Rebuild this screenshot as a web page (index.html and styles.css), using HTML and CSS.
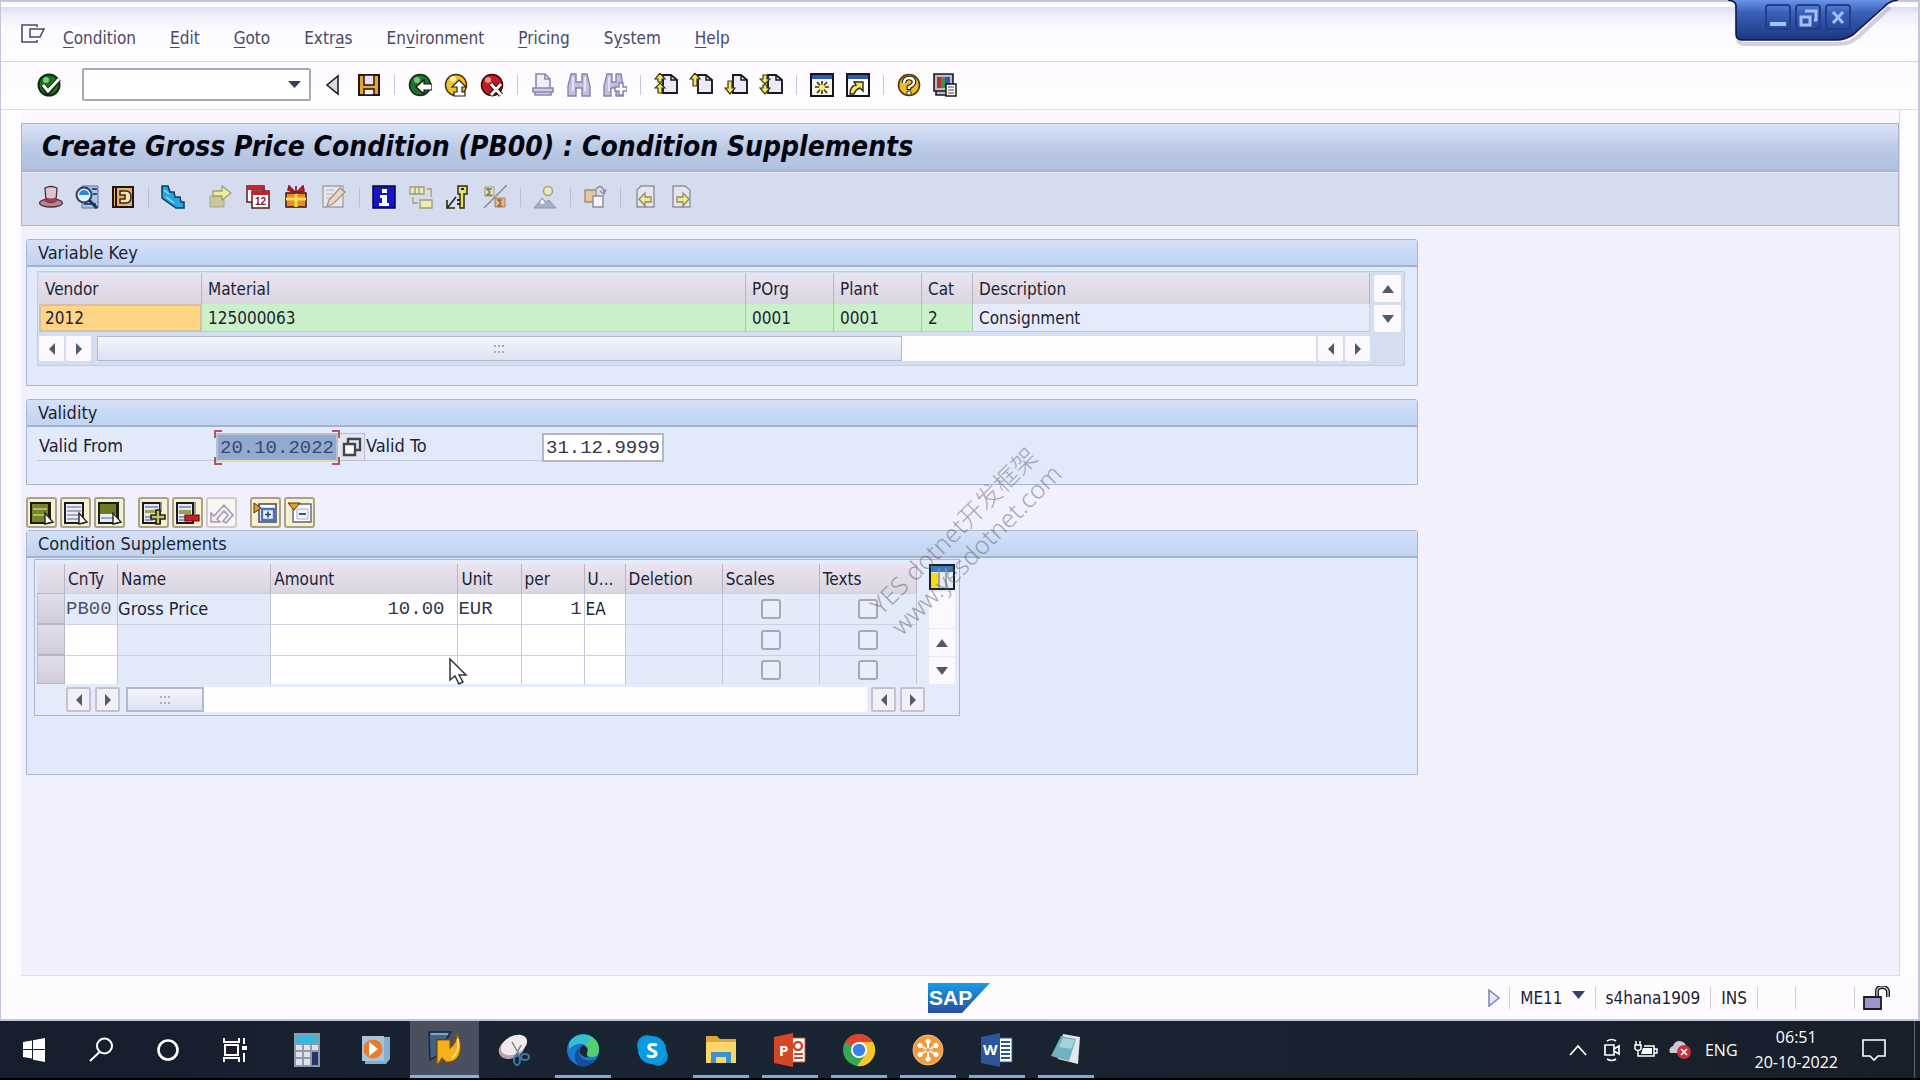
FILE: index.html
```html
<!DOCTYPE html>
<html lang="en">
<head>
<meta charset="utf-8">
<title>Create Gross Price Condition (PB00) : Condition Supplements</title>
<link rel="stylesheet" href="styles.css">
</head>
<body>
<div class="window">
  <nav class="menubar">
    <button class="icon-btn menu-icon" aria-label="Window menu"><svg width="24" height="20" viewBox="0 0 24 20" fill="none" stroke="#4a4a72" stroke-width="1.6"><path d="M16 3V1H1v17h15v-2M9 5h14l-4 8H9z"/></svg></button>
    <a href="#"><u>C</u>ondition</a>
    <a href="#"><u>E</u>dit</a>
    <a href="#"><u>G</u>oto</a>
    <a href="#">Extr<u>a</u>s</a>
    <a href="#">En<u>v</u>ironment</a>
    <a href="#"><u>P</u>ricing</a>
    <a href="#">S<u>y</u>stem</a>
    <a href="#"><u>H</u>elp</a>
  </nav>

  <div class="window-controls">
    <svg class="controls-shape" width="172" height="48" viewBox="0 0 172 48">
      <defs><linearGradient id="wc" x1="0" y1="0" x2="0" y2="1"><stop offset="0" stop-color="#6a94e8"/><stop offset=".3" stop-color="#3a62b8"/><stop offset="1" stop-color="#1b3580"/></linearGradient></defs>
      <path d="M10 40q1 4 8 4h92q14 0 22-9l30-28" fill="none" stroke="#a9a6bb" stroke-width="4" opacity=".5"/>
      <path d="M0 0q8 1 8 6v28q0 6 6 6h94q10 0 18-6l30-27q5-6 14-7z" fill="url(#wc)"/>
      <path d="M0 0q8 1 8 6v28q0 6 6 6h94q10 0 18-6l30-27q5-6 14-7" fill="none" stroke="#0c1a48" stroke-width="1.6"/>
    </svg>
    <div class="controls-row">
      <button aria-label="Minimize"><svg width="24" height="24" viewBox="0 0 24 24"><path d="M4 17h16v4H4z" fill="#a3c0ff"/></svg></button>
      <button aria-label="Restore"><svg width="24" height="24" viewBox="0 0 24 24" fill="none" stroke="#a3c0ff" stroke-width="3"><path d="M5 12h9v8H5zM9 6h11v9h-2"/></svg></button>
      <button aria-label="Close"><svg width="24" height="24" viewBox="0 0 24 24" stroke="#a3c0ff" stroke-width="3"><path d="M7 7l10 11M17 7L7 18"/></svg></button>
    </div>
  </div>

  <div class="toolbar">
    <button class="icon-btn" aria-label="Enter"><svg viewBox="0 0 24 24"><circle cx="12" cy="12" r="10.5" fill="#1e6d22" stroke="#0b2a10" stroke-width="2"/><circle cx="9" cy="7" r="3" fill="#7fd07c"/><path d="M6 12l5 7L22 6" fill="none" stroke="#101a10" stroke-width="5"/><path d="M6 12l5 6L22 6" fill="none" stroke="#fff" stroke-width="3"/></svg></button>
    <div class="command">
      <input type="text" aria-label="Command field">
      <svg width="13" height="8" viewBox="0 0 13 8"><path d="M0 1h13L6.500 8z" fill="#35405f"/></svg>
    </div>
    <div class="tools first">
      <button class="icon-btn" aria-label="Collapse"><svg viewBox="0 0 24 24"><path d="M17 3v18L6 12z" fill="#dadbe4" stroke="#222" stroke-width="1.6"/></svg></button>
      <button class="icon-btn" aria-label="Save"><svg viewBox="0 0 24 24"><path d="M2 2h20v20H2z" fill="#e5a43c" stroke="#241705" stroke-width="2"/><path d="M7 2h10v10H7z" fill="#efdcf2" stroke="#241705" stroke-width="1.500"/><path d="M7 16h10v6H7z" fill="#f4edf7" stroke="#241705" stroke-width="1.500"/></svg></button>
    </div>
    <span class="sep"></span>
    <div class="tools">
      <button class="icon-btn" aria-label="Back"><svg viewBox="0 0 24 24"><circle cx="12" cy="12" r="10.500" fill="#246f2b" stroke="#0d2b10" stroke-width="1.500"/><circle cx="9" cy="7" r="3" fill="#7cc780"/><path d="M8 14l8-7v4h8v6h-8v4z" fill="#fff" stroke="#111" stroke-width="1.200"/></svg></button>
      <button class="icon-btn" aria-label="Exit"><svg viewBox="0 0 24 24"><circle cx="12" cy="12" r="10.500" fill="#f0c22c" stroke="#4a3507" stroke-width="1.500"/><circle cx="9" cy="6" r="3" fill="#fff2a0"/><path d="M15 7l7 7h-4v5h3v4H10v-4h3v-5H8z" fill="#fff" stroke="#222" stroke-width="1.200"/></svg></button>
      <button class="icon-btn" aria-label="Cancel"><svg viewBox="0 0 24 24"><circle cx="12" cy="12" r="10.500" fill="#c11d22" stroke="#3e0508" stroke-width="1.500"/><circle cx="8" cy="7" r="3" fill="#f19191"/><path d="M11 11l10 11M21 11L11 22" stroke="#300" stroke-width="5"/><path d="M11 11l10 11M21 11L11 22" stroke="#fff" stroke-width="3"/></svg></button>
    </div>
    <span class="sep"></span>
    <div class="tools">
      <button class="icon-btn" aria-label="Print"><svg viewBox="0 0 24 24" fill="#f0eef9" stroke="#8c88ab" stroke-width="1.600"><path d="M5 15V1h9l5 5v9M14 1v5h5"/><path d="M2 15h20v4H2zM4 19h16v3H4z" fill="#cfcbe6"/></svg></button>
      <button class="icon-btn" aria-label="Find"><svg viewBox="0 0 24 24" fill="#c3bfe3" stroke="#8783ad" stroke-width="1.400"><path d="M4 1h5v8h6V1h5l3 12v10h-8v-8H9v8H1V13z"/><path d="M6 4v14M18 4v14" stroke="#f4f2ff"/></svg></button>
      <button class="icon-btn" aria-label="Find next"><svg viewBox="0 0 24 24" fill="#c3bfe3" stroke="#8783ad" stroke-width="1.400"><path d="M4 1h5v8h4V1h5l2 12v10h-7v-8H8v8H1V13z"/><path d="M6 4v14" stroke="#f4f2ff"/><path d="M16 10h4v4h4v4h-4v4h-4v-4h-4v-4h4z" fill="#fff"/></svg></button>
    </div>
    <span class="sep"></span>
    <div class="tools tight">
      <button class="icon-btn" aria-label="First page"><svg viewBox="0 0 24 24"><path d="M9 2h8l6 5v13H9z" fill="#eceafa" stroke="#191926" stroke-width="1.900"/><path d="M17 2v5h6" fill="none" stroke="#191926" stroke-width="1.500"/><path d="M6 0l5 6H8v3H4V6H1zM6 10l5 5H8v5H4v-5H1z" fill="#f1e56a" stroke="#3b3710" stroke-width="1.200"/></svg></button>
      <button class="icon-btn" aria-label="Previous page"><svg viewBox="0 0 24 24"><path d="M9 2h8l6 5v13H9z" fill="#eceafa" stroke="#191926" stroke-width="1.900"/><path d="M17 2v5h6" fill="none" stroke="#191926" stroke-width="1.500"/><path d="M6 0l5 6H8v7H4V6H1z" fill="#f1e56a" stroke="#3b3710" stroke-width="1.200"/></svg></button>
      <button class="icon-btn" aria-label="Next page"><svg viewBox="0 0 24 24"><path d="M9 2h8l6 5v13H9z" fill="#eceafa" stroke="#191926" stroke-width="1.900"/><path d="M17 2v5h6" fill="none" stroke="#191926" stroke-width="1.500"/><path d="M4 8h4v7h3l-5 6-5-6h3z" fill="#f1e56a" stroke="#3b3710" stroke-width="1.200"/></svg></button>
      <button class="icon-btn" aria-label="Last page"><svg viewBox="0 0 24 24"><path d="M9 2h8l6 5v13H9z" fill="#eceafa" stroke="#191926" stroke-width="1.900"/><path d="M17 2v5h6" fill="none" stroke="#191926" stroke-width="1.500"/><path d="M4 2h4v4h3l-5 5-5-5h3zM4 12h4v3h3l-5 6-5-6h3z" fill="#f1e56a" stroke="#3b3710" stroke-width="1.200"/></svg></button>
    </div>
    <span class="sep"></span>
    <div class="tools">
      <button class="icon-btn" aria-label="New session"><svg viewBox="0 0 24 24"><path d="M1 1h22v22H1z" fill="#fbf7e8" stroke="#14141f" stroke-width="2"/><path d="M2 2h20v4H2z" fill="#2b59b8"/><path d="M12 8v13M5 14h14M7 9l10 11M17 9L7 20" stroke="#31300f" stroke-width="1.600"/><circle cx="12" cy="14.500" r="3" fill="#f8ec6a"/></svg></button>
      <button class="icon-btn" aria-label="Create shortcut"><svg viewBox="0 0 24 24"><path d="M1 1h22v22H1z" fill="#fff" stroke="#14141f" stroke-width="2"/><path d="M2 2h20v4H2z" fill="#2b59b8"/><path d="M4 21q0-8 6-9L8 9h9v9l-3-3q-4 1-6 6z" fill="#f1e56a" stroke="#2c2a10" stroke-width="1.400"/></svg></button>
    </div>
    <span class="sep"></span>
    <div class="tools">
      <button class="icon-btn" aria-label="Help"><svg viewBox="0 0 24 24"><circle cx="12" cy="12" r="10.500" fill="#f0bb2d" stroke="#4d3a08" stroke-width="1.600"/><path d="M7 10q0-5 5-5t5 4q0 3-5 5v3" fill="none" stroke="#2b2108" stroke-width="4.600"/><path d="M7 10q0-5 5-5t5 4q0 3-5 5v2" fill="none" stroke="#fff" stroke-width="2.400"/><circle cx="12" cy="20" r="2.200" fill="#fff" stroke="#2b2108"/></svg></button>
      <button class="icon-btn" aria-label="Customize layout"><svg viewBox="0 0 24 24"><path d="M1 1h19v17H1zM3 18h15v4H3z" fill="#bcbcc8" stroke="#18181f" stroke-width="1.600"/><path d="M4 4h5v11H4z" fill="#c82a2a"/><path d="M8 4h4v11H8z" fill="#2f9b45"/><path d="M12 4h5v11h-5z" fill="#4646c8"/><path d="M13 11h10v12H13z" fill="#fff" stroke="#18181f" stroke-width="1.500"/><path d="M15 14h6M15 17h6M15 20h6" stroke="#444"/></svg></button>
    </div>
  </div>

  <main class="screen">
    <header class="title-panel">
      <h1>Create Gross Price Condition (PB00) : Condition Supplements</h1>
      <div class="app-toolbar">
        <div class="tools">
          <button class="icon-btn" aria-label="Header"><svg viewBox="0 0 24 24"><ellipse cx="12" cy="18" rx="11.500" ry="4" fill="#b78592" stroke="#4c2f3c" stroke-width="1.300"/><path d="M6 3q6-3 12 0l-1 13q-5 3-10 0z" fill="#d9c6cf" stroke="#4c2f3c" stroke-width="1.300"/><path d="M6.500 12q5.500 3 11 0v4q-5.500 3-11 0z" fill="#9d3c50"/></svg></button>
          <button class="icon-btn" aria-label="Details"><svg viewBox="0 0 24 24"><path d="M7 1h16v22H7z" fill="#a9c3e8" stroke="#5e7397"/><path d="M9 19h12M17 4h5M18 9h4" stroke="#274f8c" stroke-width="2"/><circle cx="9" cy="10" r="7.500" fill="#dff0ff" stroke="#2d405e" stroke-width="2"/><path d="M4 10a5 5 0 0110 0z" fill="#2b87d4"/><path d="M14 15l8 8" stroke="#26324c" stroke-width="3"/></svg></button>
          <button class="icon-btn" aria-label="Key"><svg viewBox="0 0 24 24"><path d="M2 2h20v20H2z" fill="#e6b26a" stroke="#1f160b" stroke-width="2"/><path d="M5 2v20" stroke="#1f160b" stroke-width="2"/><path d="M9 6h6q5 0 5 6t-5 6H9v-4h5v-4H9z" fill="#f6e2bb" stroke="#382712" stroke-width="1.500"/></svg></button>
        </div>
        <span class="sep"></span>
        <div class="tools"><button class="icon-btn" aria-label="Scales"><svg viewBox="0 0 24 24"><path d="M1 1h6l2 6h4l1 5h5l1 5h3v6h-8L1 13z" fill="#2aa4dc" stroke="#0a3c60" stroke-width="1.500"/><path d="M3 5l5 4M5 12l8 6" stroke="#8fe0fb" stroke-width="1.500"/></svg></button></div>
        <div class="tools loose">
          <button class="icon-btn" aria-label="Copy item"><svg viewBox="0 0 24 24"><path d="M2 11h14v11H2z" fill="#c8c89a" stroke="#a5a487"/><path d="M5 6h9V1l9 7-9 7v-4H5z" fill="#eeeaa0" stroke="#a19f74" stroke-width="1.300"/></svg></button>
          <button class="icon-btn" aria-label="Validity periods"><svg viewBox="0 0 24 24"><path d="M1 1h17v16H1z" fill="#fff" stroke="#58181f" stroke-width="1.500"/><path d="M1 1h17v4H1z" fill="#c5232c"/><path d="M6 6h17v17H6z" fill="#fff" stroke="#58181f" stroke-width="1.500"/><path d="M6 6h17v4H6z" fill="#c5232c"/><text x="9" y="20" class="tiny">12</text></svg></button>
          <button class="icon-btn" aria-label="Free goods"><svg viewBox="0 0 24 24"><path d="M2 8h20v14H2z" fill="#eb8a22" stroke="#3a1508" stroke-width="1.500"/><path d="M12 8v14M2 14h20" stroke="#f6df54" stroke-width="3"/><path d="M12 8L5 1l-1 4zM12 8l7-7 1 5zM12 8V1" fill="#cc2430" stroke="#8e1420" stroke-width="1.600"/></svg></button>
          <button class="icon-btn" aria-label="Condition texts"><svg viewBox="0 0 24 24"><path d="M1 1h20v21H1z" fill="#e9e7ee" stroke="#a39da6" stroke-width="1.300"/><path d="M4 5h8M4 9h7M4 13h5" stroke="#b6b4bf"/><path d="M5 21l2-6L18 3l5 4-12 12z" fill="#eed6bd" stroke="#9f928a" stroke-width="1.300"/></svg></button>
        </div>
        <span class="sep"></span>
        <div class="tools mid">
          <button class="icon-btn" aria-label="Additional data"><svg viewBox="0 0 24 24"><path d="M1 1h22v22H1z" fill="#1616c4" stroke="#05053f" stroke-width="1.500"/><path d="M10 4h5v4h-5zM8 10h7v8h2v3H7v-3h3v-5H8z" fill="#fff"/></svg></button>
          <button class="icon-btn" aria-label="Exclusion"><svg viewBox="0 0 24 24" fill="#ecebb2" stroke="#9a9a86" stroke-width="1.300"><path d="M1 2h14v7H1zM6 2v7M10 2v7M11 15h12v8H11zM18 4h4v8M4 12v6h5"/></svg></button>
          <button class="icon-btn" aria-label="Release status"><svg viewBox="0 0 24 24"><path d="M10 12L2 22M1 15v8h8" fill="none" stroke="#282820" stroke-width="1.600"/><path d="M12 1h9v8h-3v14h-4V9h-2z" fill="#e8df63" stroke="#2e2b12" stroke-width="1.500"/><path d="M15 4h3M14 15h-3M14 19h-3" stroke="#2e2b12" stroke-width="2"/></svg></button>
          <button class="icon-btn" aria-label="Cumulative values"><svg viewBox="0 0 24 24"><path d="M2 2h9v9H2z" fill="#eee7a9" stroke="#a19a7c"/><path d="M9 4H4l3 3-3 3h5" fill="none" stroke="#7b745a" stroke-width="1.500"/><path d="M12 13h10v9H12z" fill="#e2b98a" stroke="#9b8463"/><path d="M19 15h-4l3 3-3 3h4" fill="none" stroke="#8b6842" stroke-width="1.300"/><path d="M24 0L1 23" stroke="#8e8b86" stroke-width="1.500"/></svg></button>
        </div>
        <span class="sep"></span>
        <div class="tools"><button class="icon-btn" aria-label="Overview"><svg viewBox="0 0 24 24"><circle cx="15" cy="6" r="4.500" fill="#eeeab1" stroke="#a5a282" stroke-width="1.400"/><path d="M1 23l8-10 4 4 3-2 7 8z" fill="#a5afc4" stroke="#8f98ad"/><path d="M9 14l3 4-3 1-2-1z" fill="#fff"/></svg></button></div>
        <span class="sep"></span>
        <div class="tools"><button class="icon-btn" aria-label="Duplicate"><svg viewBox="0 0 24 24"><path d="M2 5h11v12H2z" fill="#e5c7a0" stroke="#a08c78" stroke-width="1.300"/><path d="M10 11h10v11H10z" fill="#f5f5fa" stroke="#8c8c98" stroke-width="1.400"/><path d="M13 4q6-6 8 3M17 6l4 3 2-5" fill="none" stroke="#8c8c98" stroke-width="1.500"/></svg></button></div>
        <span class="sep"></span>
        <div class="tools mid">
          <button class="icon-btn" aria-label="Previous item"><svg viewBox="0 0 24 24"><path d="M8 1h13v21H4V5z" fill="#e4e5ef" stroke="#8d909e" stroke-width="1.400"/><path d="M6 14l6-6v4h6v5h-6v4z" fill="#eee99c" stroke="#8e8b62" stroke-width="1.300"/></svg></button>
          <button class="icon-btn" aria-label="Next item"><svg viewBox="0 0 24 24"><path d="M3 1h12l5 4v17H3z" fill="#e4e5ef" stroke="#8d909e" stroke-width="1.400"/><path d="M19 14l-6-6v4H7v5h6v4z" fill="#eee99c" stroke="#8e8b62" stroke-width="1.300"/></svg></button>
        </div>
      </div>
    </header>

    <section class="group key-group">
      <h2>Variable Key</h2>
      <div class="key-grid">
        <table class="key-table">
          <colgroup><col class="k-vendor"><col class="k-material"><col class="k-org"><col class="k-org"><col class="k-cat"><col></colgroup>
          <thead><tr><th>Vendor</th><th>Material</th><th>POrg</th><th>Plant</th><th>Cat</th><th>Description</th></tr></thead>
          <tbody><tr><td class="current">2012</td><td class="key">125000063</td><td class="key">0001</td><td class="key">0001</td><td class="key">2</td><td>Consignment</td></tr></tbody>
        </table>
        <div class="vscroll">
          <button class="arrow flat" aria-label="Scroll up"><svg width="12" height="8" viewBox="0 0 12 8"><path d="M0 8h12L6 0z"/></svg></button>
          <button class="arrow flat" aria-label="Scroll down"><svg width="12" height="8" viewBox="0 0 12 8"><path d="M0 0h12L6 8z"/></svg></button>
        </div>
        <div class="hscroll">
          <button class="arrow flat" aria-label="Scroll to start"><svg width="8" height="12" viewBox="0 0 8 12"><path d="M7 0v12L1 6z"/></svg></button>
          <button class="arrow flat" aria-label="Scroll left"><svg width="8" height="12" viewBox="0 0 8 12"><path d="M1 0v12l6-6z"/></svg></button>
          <div class="track"><div class="thumb key-thumb"><i></i></div></div>
          <button class="arrow flat" aria-label="Scroll right"><svg width="8" height="12" viewBox="0 0 8 12"><path d="M7 0v12L1 6z"/></svg></button>
          <button class="arrow flat" aria-label="Scroll to end"><svg width="8" height="12" viewBox="0 0 8 12"><path d="M1 0v12l6-6z"/></svg></button>
        </div>
      </div>
    </section>

    <section class="group validity">
      <h2>Validity</h2>
      <div class="validity-row">
        <label class="from-label" for="from">Valid From</label>
        <div class="focus-box"><input class="date selected" id="from" type="text" value="20.10.2022"></div>
        <button class="f4" aria-label="Input help"><svg width="20" height="20" viewBox="0 0 20 20"><path d="M6 2h12v11H6z" fill="#e9e9f2" stroke="#45454d" stroke-width="2.400"/><path d="M2 7h11v11H2z" fill="#fff" stroke="#45454d" stroke-width="2.400"/></svg></button>
        <label class="to-label" for="to">Valid To</label>
        <input class="date to" id="to" type="text" value="31.12.9999">
      </div>
    </section>

    <div class="edit-toolbar">
      <div class="edit-group">
        <button aria-label="Select all"><svg viewBox="0 0 26 26"><path d="M2 3h18v20H2z" fill="#76822c" stroke="#1b1b10" stroke-width="2"/><path d="M21 2v20" stroke="#1b1b10" stroke-width="2"/><path d="M4 9h14M4 15h14" stroke="#c4ca83" stroke-width="1.500"/><path d="M16 13v11l8-2z" fill="#fff" stroke="#222" stroke-width="1.400"/></svg></button>
        <button aria-label="Deselect all"><svg viewBox="0 0 26 26"><path d="M2 3h18v20H2z" fill="#e9ecf8" stroke="#1b1b20" stroke-width="2"/><path d="M4 7h14M4 11h14M4 15h12M4 19h12" stroke="#8693ae" stroke-width="1.500"/><path d="M16 13v11l8-2z" fill="#fff" stroke="#222" stroke-width="1.400"/></svg></button>
        <button aria-label="Select block"><svg viewBox="0 0 26 26"><path d="M2 3h18v20H2z" fill="#e9ecf8" stroke="#1b1b20" stroke-width="2"/><path d="M3 4h16v10H3z" fill="#6d7c1e"/><path d="M4 18h12" stroke="#8693ae" stroke-width="1.500"/><path d="M21 2v20" stroke="#1b1b10" stroke-width="2"/><path d="M16 13v11l8-2z" fill="#fff" stroke="#222" stroke-width="1.400"/></svg></button>
      </div>
      <div class="edit-group">
        <button aria-label="Insert row"><svg viewBox="0 0 26 26"><path d="M2 3h17v20H2z" fill="#e4e8f4" stroke="#1b1b20" stroke-width="2"/><path d="M20 2v10M4 7h13M4 17h8M4 20h8" stroke="#77829c" stroke-width="1.500"/><path d="M4 10h13v3H4z" fill="#9aa354"/><path d="M15 10h4v5h5v4h-5v5h-4v-5h-5v-4h5z" fill="#c1c573" stroke="#23230f" stroke-width="1.600"/></svg></button>
        <button aria-label="Delete row"><svg viewBox="0 0 26 26"><path d="M2 3h16v20H2z" fill="#e4e8f4" stroke="#1b1b20" stroke-width="2"/><path d="M20 2v12M4 7h12M4 17h8M4 20h8" stroke="#77829c" stroke-width="1.500"/><path d="M4 10h12v4H4z" fill="#9aa354"/><path d="M10 15h14v6H10z" fill="#d01f22" stroke="#5b0d10" stroke-width="1.200"/></svg></button>
        <button class="off" aria-label="Undo"><svg viewBox="0 0 26 26"><path d="M2 13v9h9l-3-3 7-8 4 4-5 6 3 2 7-8-9-10L5 16z" fill="#f4e8ee" stroke="#a498b6" stroke-width="1.500"/></svg></button>
      </div>
      <div class="edit-group">
        <button aria-label="Detail"><svg viewBox="0 0 26 26"><path d="M6 4h17v18H6z" fill="#fff" stroke="#3a4565" stroke-width="1.500"/><path d="M9 9h12v11H9z" fill="#e8f0ff" stroke="#4a72b4" stroke-width="2.400"/><path d="M12 14.500h6M15 11.500v6" stroke="#25406f" stroke-width="1.600"/><path d="M1 3l7 5-7 5z" fill="#e79d2b" stroke="#4c3512"/></svg></button>
        <button aria-label="Overview of items"><svg viewBox="0 0 26 26"><path d="M6 4h18v18H6z" fill="#fff" stroke="#5d6278" stroke-width="1.400"/><path d="M10 9h11v10H10z" fill="#f4f5ff" stroke="#a4acc8"/><path d="M12 14h7" stroke="#25406f" stroke-width="1.800"/><path d="M1 3h12L7 10z" fill="#e79d2b" stroke="#4c3512"/></svg></button>
      </div>
    </div>

    <section class="group supplements">
      <h2>Condition Supplements</h2>
      <div class="cond-grid">
        <table class="cond-table">
          <colgroup><col class="c-sel"><col class="c-type"><col class="c-name"><col class="c-amount"><col class="c-unit"><col class="c-per"><col class="c-uom"><col class="c-flag"><col class="c-flag"><col class="c-flag"></colgroup>
          <thead><tr><th></th><th>CnTy</th><th>Name</th><th>Amount</th><th>Unit</th><th>per</th><th>U...</th><th>Deletion</th><th>Scales</th><th>Texts</th></tr></thead>
          <tbody>
            <tr><td class="row-sel"></td><td class="mono">PB00</td><td class="name">Gross Price</td><td class="edit"><input class="amount" aria-label="Amount" value="10.00"></td><td class="edit"><input aria-label="Unit" value="EUR"></td><td class="edit"><input class="per" aria-label="per" value="1"></td><td class="edit uom">EA</td><td></td><td class="tick"><input type="checkbox" aria-label="Scales" disabled></td><td class="tick"><input type="checkbox" aria-label="Texts" disabled></td></tr>
            <tr><td class="row-sel"></td><td class="edit"><input aria-label="CnTy"></td><td></td><td class="edit"><input class="amount" aria-label="Amount"></td><td class="edit"><input aria-label="Unit"></td><td class="edit"><input class="per" aria-label="per"></td><td class="edit"></td><td></td><td class="tick"><input type="checkbox" aria-label="Scales" disabled></td><td class="tick"><input type="checkbox" aria-label="Texts" disabled></td></tr>
            <tr><td class="row-sel"></td><td class="edit"><input aria-label="CnTy"></td><td></td><td class="edit"><input class="amount" aria-label="Amount"></td><td class="edit"><input aria-label="Unit"></td><td class="edit"><input class="per" aria-label="per"></td><td class="edit"></td><td></td><td class="tick"><input type="checkbox" aria-label="Scales" disabled></td><td class="tick"><input type="checkbox" aria-label="Texts" disabled></td></tr>
          </tbody>
        </table>
        <div class="cond-side">
          <button class="config" aria-label="Table settings"><svg width="26" height="26" viewBox="0 0 26 26"><path d="M1 1h24v24H1z" fill="#e9eaf1" stroke="#16202e" stroke-width="2"/><path d="M2 2h22v6H2z" fill="#3d78b8"/><path d="M2 9h8v15H2z" fill="#f7dc15"/><path d="M10 4v20M17 4v20" stroke="#8792a5" stroke-width="1.500"/></svg></button>
          <div class="side-track"></div>
          <button class="arrow flat" aria-label="Scroll up"><svg width="12" height="8" viewBox="0 0 12 8"><path d="M0 8h12L6 0z"/></svg></button>
          <button class="arrow flat" aria-label="Scroll down"><svg width="12" height="8" viewBox="0 0 12 8"><path d="M0 0h12L6 8z"/></svg></button>
        </div>
        <div class="hscroll">
          <button class="arrow" aria-label="Scroll to start"><svg width="8" height="12" viewBox="0 0 8 12"><path d="M7 0v12L1 6z"/></svg></button>
          <button class="arrow" aria-label="Scroll left"><svg width="8" height="12" viewBox="0 0 8 12"><path d="M1 0v12l6-6z"/></svg></button>
          <div class="track"><div class="thumb cond-thumb"><i></i></div></div>
          <button class="arrow" aria-label="Scroll right"><svg width="8" height="12" viewBox="0 0 8 12"><path d="M7 0v12L1 6z"/></svg></button>
          <button class="arrow" aria-label="Scroll to end"><svg width="8" height="12" viewBox="0 0 8 12"><path d="M1 0v12l6-6z"/></svg></button>
        </div>
      </div>
    </section>
  </main>

  <footer class="statusbar">
    <svg class="sap-logo" width="62" height="30" viewBox="0 0 62 30"><defs><linearGradient id="sap" x1="0" y1="0" x2="0" y2="1"><stop offset="0" stop-color="#1a9be4"/><stop offset="1" stop-color="#2350a0"/></linearGradient></defs><path d="M0 0h62L34 30H0z" fill="url(#sap)"/><text x="1" y="22" class="sap-text">SAP</text></svg>
    <div class="status-items">
      <button class="icon-btn expand" aria-label="Expand status"><svg width="12" height="18" viewBox="0 0 12 18"><path d="M1 1l10 8-10 8z" fill="#e3e9f6" stroke="#7c8ab5" stroke-width="1.600"/></svg></button>
      <button class="status-cell tcode">ME11 <svg width="13" height="8" viewBox="0 0 13 8"><path d="M0 0h13L6.500 8z" fill="#333f70"/></svg></button>
      <span class="status-cell">s4hana1909</span>
      <span class="status-cell">INS</span>
      <span class="status-cell blank"></span>
      <span class="status-cell blank wide"></span>
      <span class="status-cell lock"><svg width="27" height="24" viewBox="0 0 27 24"><path d="M14 12V5q0-4 5-4t6 4v6" fill="none" stroke="#1b1b22" stroke-width="4"/><path d="M14 12V5q0-4 5-4t6 4v6" fill="none" stroke="#e3e3ea" stroke-width="1.200"/><path d="M1 11h17v12H1z" fill="#9c96c8" stroke="#1b1b22" stroke-width="1.800"/></svg></span>
    </div>
  </footer>
</div>

<div class="taskbar">
  <div class="system-buttons">
    <button aria-label="Start"><svg width="24" height="24" viewBox="0 0 24 24" fill="#fff"><path d="M1 4l9-1.500V11H1zM11 2.300L23 0v11H11zM1 12h9v8.500L1 19zM11 12h12v12l-12-2.300z"/></svg></button>
    <button aria-label="Search"><svg width="26" height="26" viewBox="0 0 26 26" fill="none" stroke="#fff" stroke-width="2"><circle cx="16.500" cy="9" r="7.500"/><path d="M11.500 15L2 24"/></svg></button>
    <button aria-label="Cortana"><svg width="24" height="24" viewBox="0 0 24 24" fill="none" stroke="#fff" stroke-width="2.600"><circle cx="12" cy="12" r="9.500"/></svg></button>
    <button aria-label="Task view"><svg width="26" height="26" viewBox="0 0 26 26" fill="none" stroke="#fff" stroke-width="2"><path d="M2 1v4h15V1M2 25v-4h15v4M3 8h13v10H3zM22 1v6M22 16v9"/><path d="M20 9h5v4h-5z" fill="#fff" stroke="none"/></svg></button>
  </div>
  <div class="apps">
    <button aria-label="Calculator"><svg width="26" height="34" viewBox="3 0 26 34"><path d="M3 0h26v34H3z" fill="#8f99a8"/><path d="M5 2h22v8H5z" fill="#35b7e2"/><path d="M5 12h6v5H5zM13 12h6v5h-6zM21 12h6v5h-6zM5 19h6v5H5zM13 19h6v5h-6zM5 26h6v6H5zM13 26h6v6h-6z" fill="#dfe3ee"/><path d="M21 19h6v13h-6z" fill="#24346c"/></svg></button>
    <button aria-label="Media player"><svg width="32" height="30" viewBox="0 0 32 30"><path d="M5 2h25v22l-4 5H5z" fill="#84aed0"/><path d="M2 1h22v25H2z" fill="#a9c3d9"/><circle cx="13" cy="14" r="9.500" fill="#ea7a2c"/><path d="M9 7v14l9-7z" fill="#fff"/></svg></button>
    <button class="active" aria-label="SAP Logon"><svg width="34" height="36" viewBox="0 0 34 36"><path d="M1 2h22l-5 8H9v16l-7 4z" fill="#3f6288" stroke="#182a42" stroke-width="1.500"/><path d="M3 4h17" stroke="#9db9d6" stroke-width="1.500"/><path d="M9 10h13v8q7-5 7-15 6 13 2 22-4 8-13 7l-4-4-4 6h-1z" fill="#f5b11d" stroke="#8a5608" stroke-width="1.200"/><path d="M30 9q2 12-6 19" fill="none" stroke="#fbe08a" stroke-width="1.800"/></svg></button>
    <button aria-label="Snipping tool"><svg width="34" height="34" viewBox="0 0 34 34"><ellipse cx="15" cy="15" rx="14" ry="10" fill="#b8a1a7" transform="rotate(-28 15 15)"/><ellipse cx="17" cy="12" rx="14" ry="9" fill="#f2e9ec" transform="rotate(-28 17 12)"/><path d="M15 9l8 14M24 12l-6 12" stroke="#77808c" stroke-width="1.500"/><ellipse cx="20" cy="27" rx="3" ry="5" fill="none" stroke="#387ca6" stroke-width="2"/><ellipse cx="28" cy="24" rx="4" ry="3" fill="none" stroke="#387ca6" stroke-width="2"/></svg></button>
    <button class="open" aria-label="Edge"><svg width="34" height="34" viewBox="0 0 34 34"><circle cx="17" cy="17" r="16" fill="#1878cf"/><path d="M3 10a16 16 0 0130 5q1 8-6 9-7 0-6-4 4-7-4-9-8-1-14 5z" fill="#37bed0"/><path d="M22 2q12 5 11 15-1 7-8 7-5-1-4-4 3-6-3-9 8-1 4-9z" fill="#58ce72"/><path d="M16 12q-6 6 0 13 6 5 13 1-7 10-16 7Q3 22 16 12z" fill="#134f9d"/><path d="M17 12q6 3 4 8-1 3 2 4-6 1-9-4-1-5 3-8z" fill="#1a2533"/></svg></button>
    <button aria-label="Skype"><svg width="34" height="34" viewBox="0 0 34 34"><circle cx="12" cy="12" r="10" fill="#0b8fd0"/><circle cx="23" cy="23" r="10" fill="#0b8fd0"/><circle cx="17" cy="17" r="14" fill="#0a9be0"/><text x="11" y="25" class="app-letter">S</text></svg></button>
    <button class="open" aria-label="File explorer"><svg width="34" height="30" viewBox="0 0 34 30"><path d="M2 1h11l3 3h16v24H2z" fill="#dba63a"/><path d="M2 7h30v21H2z" fill="#fbd668"/><path d="M7 17h20v11h-5v-6H12v6H7z" fill="#3a93cf"/></svg></button>
    <button class="open" aria-label="PowerPoint"><svg width="34" height="34" viewBox="0 0 34 34"><path d="M18 5h14v24H18z" fill="#fff" stroke="#c94a2e"/><path d="M21 21h9M21 25h9" stroke="#c94a2e" stroke-width="2"/><circle cx="25" cy="13" r="4" fill="none" stroke="#c94a2e" stroke-width="2.500"/><path d="M1 4l19-4v34L1 30z" fill="#d24726"/><text x="6" y="23" class="app-letter small">P</text></svg></button>
    <button class="open" aria-label="Chrome"><svg width="34" height="34" viewBox="0 0 34 34"><circle cx="17" cy="17" r="16" fill="#35a853"/><path d="M17 17L3.100 9A16 16 0 0130.900 9z" fill="#df4332"/><path d="M17 9h13.900A16 16 0 0115 33l9-12z" fill="#f7c52c"/><circle cx="17" cy="17" r="8" fill="#fff"/><circle cx="17" cy="17" r="6.200" fill="#3f7fe8"/></svg></button>
    <button class="open" aria-label="Meeting"><svg width="32" height="32" viewBox="0 0 32 32"><circle cx="16" cy="16" r="15" fill="#f39a3b" stroke="#f8c184"/><path d="M16 7v18M8 11.500l16 9M24 11.500l-16 9" stroke="#fff" stroke-width="2" stroke-linecap="round"/><path d="M16 7h.1M16 25h.1M8 11.500h.1M24 20.500h.1M24 11.500h.1M8 20.500h.1" stroke="#fff" stroke-width="5" stroke-linecap="round"/><circle cx="16" cy="16" r="2" fill="#f39a3b"/></svg></button>
    <button class="open" aria-label="Word"><svg width="34" height="34" viewBox="0 0 34 34"><path d="M18 5h14v24H18z" fill="#fff" stroke="#2b579a"/><path d="M21 9h9M21 13h9M21 17h9M21 21h9M21 25h9" stroke="#2b579a" stroke-width="2"/><path d="M1 4l19-4v34L1 30z" fill="#2b579a"/><text x="3" y="22" class="app-letter small">W</text></svg></button>
    <button class="open" aria-label="Notepad"><svg width="34" height="34" viewBox="0 0 34 34"><path d="M14 1l17 3-2 27-20-5z" fill="#e2e8ea"/><path d="M12 3l15 3-7 22-18-5z" fill="#6fb2bd"/><path d="M14 5l12 2-4 9-12-2z" fill="#a4d3da"/></svg></button>
  </div>
  <div class="tray">
    <button aria-label="Show hidden icons"><svg width="18" height="12" viewBox="0 0 18 12" fill="none" stroke="#fff" stroke-width="1.800"><path d="M1 11l8-9 8 9"/></svg></button>
    <button aria-label="Meet now"><svg width="18" height="24" viewBox="0 0 18 24" fill="none" stroke="#fff" stroke-width="1.700"><path d="M2 7h9v10H2zM11 11l5-3v8l-5-3M4 3q5-3 9 0M4 21q5 3 9 0"/></svg></button>
    <button aria-label="Battery"><svg width="24" height="18" viewBox="0 0 24 18" fill="none" stroke="#fff" stroke-width="1.500"><path d="M2 0v4M6 0v4M1 4h6v4q-3 3-6 0zM4 10v5h16V5H10M20 8h3v4h-3"/><path d="M9 7h9v6H7z" fill="#fff" stroke="none"/></svg></button>
    <button aria-label="Cloud sync"><svg width="24" height="20" viewBox="0 0 24 20"><path d="M2 13q-2-5 3-7 3-7 10-4 5 3 3 11z" fill="#c9c7cf"/><circle cx="16" cy="12" r="7" fill="#c9303b"/><path d="M13 9l6 6M19 9l-6 6" stroke="#fff" stroke-width="1.600"/></svg></button>
    <span class="lang">ENG</span>
    <time class="clock" datetime="2022-10-20T06:51"><span>06:51</span><span>20-10-2022</span></time>
    <button aria-label="Notifications"><svg width="24" height="24" viewBox="0 0 24 24" fill="none" stroke="#fff" stroke-width="1.600"><path d="M1 2h22v16h-7l-4 4-4-4H1z"/></svg></button>
  </div>
</div>

<svg class="pointer" width="20" height="30" viewBox="0 0 20 30"><path d="M1 2v21l5-4 4 8 4-2-4-7h7z" fill="#fff" stroke="#33333d" stroke-width="1.500"/></svg>
<div class="watermark"><span>YES dotnet开发框架</span><span>www.yesdotnet.com</span></div>
</body>
</html>
```
FILE: styles.css
```css
* { box-sizing: border-box; }
body {
  margin: 0;
  min-height: 100vh;
  display: flex;
  flex-direction: column;
  position: relative;
  background: #fefcff;
  color: #1d1f35;
  font-family: "DejaVu Sans Condensed", "DejaVu Sans", sans-serif;
  font-size: 17px;
  line-height: 22px;
}
button, input { font: inherit; color: inherit; margin: 0; padding: 0; }
button { background: none; border: 0; display: flex; align-items: center; justify-content: center; }
svg { display: block; flex: none; }
h1, h2 { margin: 0; font-weight: normal; }

.window {
  flex: 1;
  display: flex;
  flex-direction: column;
  border: solid #c3c5dc;
  border-width: 2px 2px 2px 1px;
}
.menubar {
  display: flex;
  align-items: center;
  gap: 34px;
  height: 60px;
  padding: 12px 20px 0;
  background: linear-gradient(#fff 0 5px, #d9dcf0 5px, #eeedfb 12px, #fbfaff 26px, #fff);
  border-bottom: 1px solid #d5d4dd;
}
.menubar a { color: #4b4868; text-decoration: none; text-underline-offset: 3px; }
.menu-icon { margin: -8px -16px 0 0; }
.icon-btn { flex: none; }
.icon-btn svg:not([width]) { width: 24px; height: 24px; }

.window-controls { position: absolute; top: 0; right: 20px; width: 172px; }
.controls-row { position: absolute; top: 4px; left: 37px; display: flex; gap: 4px; }
.controls-row button {
  width: 26px;
  height: 26px;
  border: 2px solid #1f3d8c;
  border-radius: 4px;
}

.toolbar {
  display: flex;
  align-items: center;
  height: 48px;
  padding: 0 0 2px 36px;
  background: linear-gradient(#fdf9fe, #fff);
  border-bottom: 1px solid #dddce4;
}
.command { position: relative; width: 229px; margin-left: 21px; }
.command input { width: 100%; height: 33px; border: 2px solid #aaa7b4; border-radius: 2px; background: #fff; padding: 0 24px 0 6px; display: block; }
.command svg { position: absolute; right: 10px; top: 12px; }
.tools { display: flex; gap: 12px; }
.tools.first { margin-left: 10px; }
.tools.tight { gap: 11px; }
.tools.mid { gap: 13px; }
.tools.loose { gap: 14px; margin-left: 23px; }
.sep { width: 1px; height: 20px; margin: 0 13px; background: #c9c3e0; }

.screen {
  flex: 1;
  margin: 0 18px 0 20px;
  padding-top: 13px;
  border: solid #dcdbea;
  border-width: 0 1px 1px 0;
  background: linear-gradient(#fbf7fd 13px, #f1f0fd 13px);
}
.title-panel { border: 1px solid #adb2ca; }
.title-panel h1 {
  height: 48px;
  padding-left: 20px;
  background: linear-gradient(#dbe5f9, #bccae5 50%, #afc0e0);
  border-bottom: 2px solid #a9b5d0;
  color: #04060f;
  font-size: 28px;
  font-weight: bold;
  font-style: italic;
  line-height: 46px;
  white-space: nowrap;
}
.app-toolbar {
  display: flex;
  align-items: center;
  height: 53px;
  padding: 0 0 4px 17px;
  background: #d4dcee;
  border-top: 1px solid #e5eafa;
}
.app-toolbar .sep { margin-right: 12px; background: #b9c0d3; }

.group {
  width: 1392px;
  max-width: 100%;
  margin-left: 5px;
  background: #e2e9fa;
  border: 1px solid #a9b6d1;
  border-radius: 3px 3px 0 0;
}
.group h2 {
  height: 27px;
  padding-left: 11px;
  font-size: 18px;
  line-height: 25px;
  background: linear-gradient(#d6e0f6, #c9daf6 50%, #c2d3ef);
  border-bottom: 2px solid #a1b3d3;
}
.key-group { margin-top: 13px; padding-bottom: 19px; }
.key-grid {
  display: grid;
  grid-template-columns: 1fr 27px;
  column-gap: 4px;
  row-gap: 4px;
  margin: 4px 12px 0 10px;
  padding: 1px 3px 4px 1px;
  background: #d3def0;
  border: 1px solid #c5cce1;
}
table { border-collapse: separate; border-spacing: 0; table-layout: fixed; width: 100%; }
th, td { padding: 0 0 0 6px; text-align: left; font-weight: normal; white-space: nowrap; overflow: hidden; }
th { background: linear-gradient(#e9e4f0, #d9d5e1); border-right: 1px solid #b7b4c4; }
.key-table th { height: 31px; }
.key-table td { height: 28px; background: #e6ebfc; border-right: 1px solid #cad0e2; border-bottom: 1px solid #c0c7d8; }
.key-table .key { background: #c9f0c8; border-right-color: #a3c9ae; }
.key-table .current { background: #ffd583; border: 2px solid #d8bfa8; padding-left: 4px; }
.k-vendor { width: 163px; }
.k-material { width: 544px; }
.k-org { width: 88px; }
.k-cat { width: 51px; }

.vscroll { display: grid; grid-template-rows: 1fr 1fr; gap: 3px; padding-top: 2px; }
.arrow { width: 25px; height: 25px; background: #f0f0f8; border: 2px solid #c3c2cf; border-radius: 2px; }
.arrow.flat { border: 0; background: #fbf9fe; }
.arrow svg { fill: #555866; }
.vscroll .arrow { height: auto; width: 27px; }
.hscroll { display: flex; gap: 2px; height: 25px; }
.track { flex: 1; background: #fefcff; }
.thumb {
  height: 25px;
  background: linear-gradient(#f4f5fe, #dde1f1);
  border: 1px solid #b3b9ce;
  display: flex;
  align-items: center;
  justify-content: center;
}
.thumb i { width: 11px; height: 8px; background: repeating-linear-gradient(90deg, #a9abb9 0 2px, transparent 2px 4px); mask: linear-gradient(#000 0 2px, transparent 2px 6px, #000 6px); }
.key-grid .track { margin-left: 4px; }
.key-thumb { width: 66%; }

.validity { margin-top: 13px; }
.validity-row { display: flex; align-items: flex-start; padding: 3px 0 19px 10px; }
.from-label, .to-label { height: 31px; padding-top: 5px; border-bottom: 1px solid #c6c9da; font-size: 18px; }
.from-label { width: 177px; padding-left: 2px; }
.focus-box {
  padding: 3px 2px;
  background:
    linear-gradient(#b5545f 0 0) 0 0 / 8px 2px, linear-gradient(#b5545f 0 0) 0 0 / 2px 8px,
    linear-gradient(#b5545f 0 0) 100% 0 / 8px 2px, linear-gradient(#b5545f 0 0) 100% 0 / 2px 8px,
    linear-gradient(#b5545f 0 0) 0 100% / 8px 2px, linear-gradient(#b5545f 0 0) 0 100% / 2px 8px,
    linear-gradient(#b5545f 0 0) 100% 100% / 8px 2px, linear-gradient(#b5545f 0 0) 100% 100% / 2px 8px;
  background-repeat: no-repeat;
}
.date {
  display: block;
  width: 122px;
  height: 29px;
  padding: 0 0 0 2px;
  border: 2px solid #b9b6c2;
  background: #fff;
  color: #34364a;
  font-family: "Liberation Mono", monospace;
  font-size: 19px;
}
.date.selected { background: #93aad0; border-color: #bbbfca; border-bottom-color: #ead9a8; color: #38486f; }
.f4 { width: 25px; height: 28px; margin-top: 3px; border: solid #bfbdcb; border-width: 1px 1px 1px 0; background: #e4e4f0; }
.to-label { width: 177px; padding-left: 1px; }
.date.to { margin-top: 3px; }

.edit-toolbar { display: flex; gap: 13px; padding: 12px 0 2px 5px; }
.edit-group { display: flex; gap: 3px; }
.edit-group button { width: 31px; height: 31px; background: #f7f1d2; border: 2px solid #aaa287; border-radius: 3px; }
.edit-group button.off { background: #fbf5f3; border-color: #d2cbc8; }
.edit-group svg { width: 26px; height: 26px; }

.supplements { padding-bottom: 58px; }
.cond-grid {
  display: grid;
  grid-template-columns: 880px 28px;
  column-gap: 12px;
  row-gap: 3px;
  width: 926px;
  margin: 1px 0 0 7px;
  padding: 4px 2px 3px;
  border: 1px solid #a9b6d1;
  background: #e5ebfb;
}
.cond-table th { height: 29px; padding-left: 3px; }
.cond-table td { height: 31px; padding-left: 1px; background: #e3ebfb; border-right: 1px solid #c3c6d8; border-top: 1px solid #cdd0e0; }
.cond-table tr:last-child td { height: 29px; }
.cond-table .edit { background: #fff; padding: 0; }
.cond-table .row-sel { background: linear-gradient(#e2deea, #d0ccdb); border: 1px solid #b9b6c7; }
.cond-table .uom { padding-left: 1px; }
.cond-table .name { padding-left: 0; font-size: 18px; }
.cond-table td > input:not([type]) { display: block; width: 100%; height: 28px; border: 0; background: none; padding-left: 0; color: #34364a; font-family: "Liberation Mono", monospace; font-size: 19px; }
.cond-table td > input.amount { text-align: right; padding-right: 13px; }
.cond-table td > input.per { text-align: right; padding-right: 2px; }
.mono { color: #50526a; font-family: "Liberation Mono", monospace; font-size: 19px; }
.cond-table .tick { padding: 0; }
.tick input { appearance: none; display: block; width: 20px; height: 20px; margin: 0 auto; border: 2px solid #a9a8b3; border-radius: 3px; background: #e9eefb; }
.c-sel { width: 28px; }
.c-type { width: 53px; }
.c-name { width: 153px; }
.c-amount { width: 187px; }
.c-unit { width: 63px; }
.c-per { width: 63px; }
.c-uom { width: 41px; }
.c-flag { width: 97px; }
.cond-side { display: grid; grid-template-rows: 27px 1fr 27px 27px; gap: 1px; }
.cond-side .arrow { width: 26px; height: 27px; }
.config { align-items: flex-start; width: 26px; }
.side-track { background: #fbf9fe; width: 26px; }
.cond-grid .hscroll { grid-column: 1 / 3; gap: 4px; padding: 0 32px 0 29px; }
.cond-grid .track { margin-left: 2px; }
.cond-thumb { width: 78px; border-width: 2px; }

.statusbar {
  display: grid;
  grid-template-columns: 1fr auto;
  align-items: center;
  height: 43px;
  padding-right: 28px;
  background: #fefbff;
}
.sap-logo { grid-column: 1 / 3; grid-row: 1; justify-self: center; margin-left: 26px; }
.sap-text { font: bold 21px "Liberation Sans", sans-serif; fill: #fff; }
.status-items { grid-column: 2; grid-row: 1; display: flex; align-items: center; }
.expand { margin-right: 9px; }
.status-cell { display: flex; align-items: center; height: 22px; padding: 0 10px; border-left: 1px solid #d5c8d8; }
.tcode svg { margin: -6px 0 0 9px; }
.blank { width: 38px; }
.blank.wide { width: 59px; }
.status-cell.lock { padding: 0 0 0 8px; }

.taskbar {
  display: flex;
  height: 59px;
  background: linear-gradient(90deg, #161d2c, #1a2533 35%, #181f2b);
  border-bottom: 2px solid #000;
  color: #fff;
  font-family: "Open Sans", "Noto Sans", sans-serif;
  font-size: 16px;
}
.system-buttons, .apps, .tray { display: flex; }
.system-buttons button { width: 67px; }
.apps { margin-left: 4px; }
.apps button { width: 69px; }
.apps .active { background: #4a4f5d; border-bottom: 3px solid #84b3ea; }
.apps .open { background: linear-gradient(#79ace6 0 0) center bottom / 56px 3px no-repeat; }
.tray { margin-left: auto; align-items: center; border-right: 1px solid #5b616d; margin-right: 5px; }
.tray button { width: 34px; height: 56px; }
.lang { margin-left: 8px; }
.clock { display: flex; flex-direction: column; align-items: center; margin: 0 19px 0 17px; line-height: 25px; }
.tray button:last-child { margin-right: 23px; }
.tiny { font: bold 10px "Liberation Sans", sans-serif; fill: #8a2028; }
.app-letter { font: bold 22px "Open Sans", sans-serif; fill: #fff; }
.app-letter.small { font-size: 15px; }

.pointer { position: absolute; left: 449px; top: 657px; }
.watermark {
  position: absolute;
  left: 850px;
  top: 506px;
  width: 240px;
  display: flex;
  flex-direction: column;
  transform: rotate(-45deg);
  pointer-events: none;
  font-family: "Noto Sans", "Noto Sans CJK SC", sans-serif;
  font-size: 25px;
  font-weight: 300;
  line-height: 29px;
  white-space: nowrap;
  color: rgba(90, 92, 105, .5);
}
```
